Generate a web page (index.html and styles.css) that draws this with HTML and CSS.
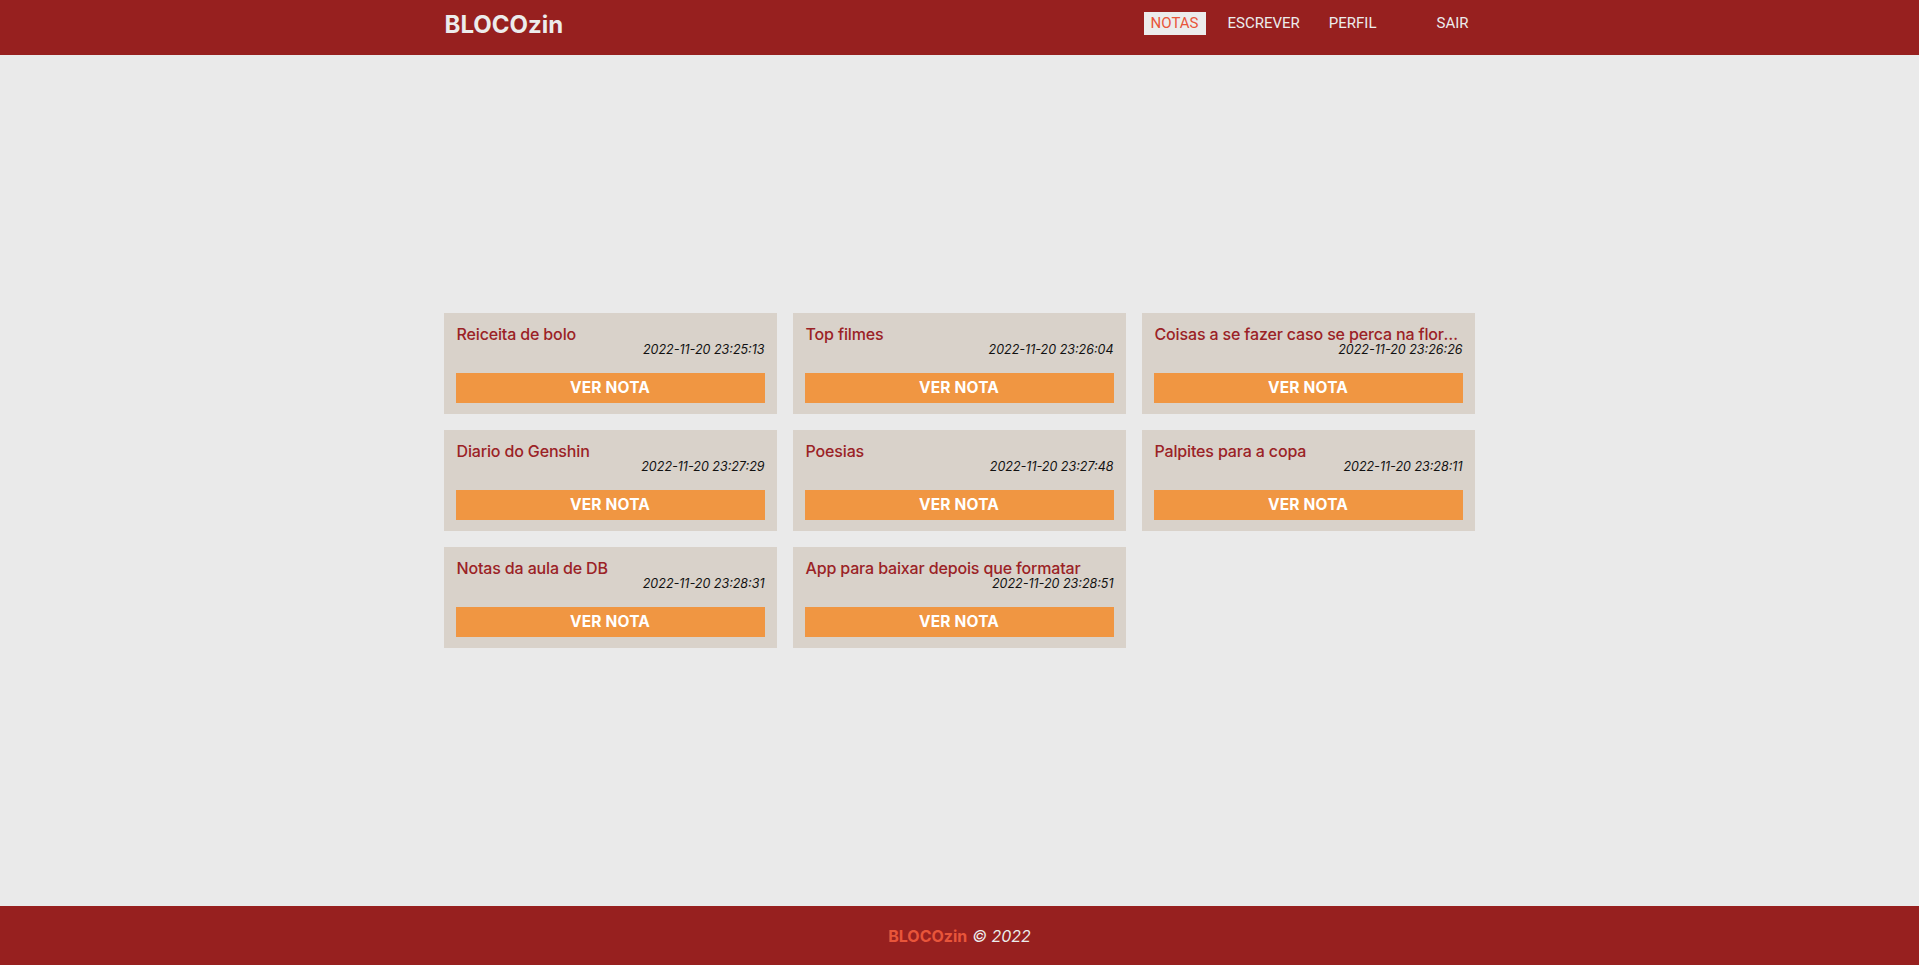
FILE: index.html
```html
<!DOCTYPE html>
<html lang="pt-BR">
<head>
<meta charset="utf-8">
<title>BLOCOzin</title>
<link rel="stylesheet" href="styles.css">
</head>
<body>
<header class="topbar">
  <div class="topbar-inner">
    <a class="logo" href="#">BLOCOzin</a>
    <nav class="nav">
      <a class="nav-link active" href="#">NOTAS</a>
      <a class="nav-link" href="#">ESCREVER</a>
      <a class="nav-link" href="#">PERFIL</a>
      <a class="nav-link logout" href="#">SAIR</a>
    </nav>
  </div>
</header>
<main class="content">
  <div class="grid">
    <div class="card"><div class="card-title">Reiceita de bolo</div><div class="card-date">2022-11-20 23:25:13</div><a class="btn" href="#">VER NOTA</a></div>
    <div class="card"><div class="card-title">Top filmes</div><div class="card-date">2022-11-20 23:26:04</div><a class="btn" href="#">VER NOTA</a></div>
    <div class="card"><div class="card-title">Coisas a se fazer caso se perca na floresta amazônica</div><div class="card-date">2022-11-20 23:26:26</div><a class="btn" href="#">VER NOTA</a></div>
    <div class="card"><div class="card-title">Diario do Genshin</div><div class="card-date">2022-11-20 23:27:29</div><a class="btn" href="#">VER NOTA</a></div>
    <div class="card"><div class="card-title">Poesias</div><div class="card-date">2022-11-20 23:27:48</div><a class="btn" href="#">VER NOTA</a></div>
    <div class="card"><div class="card-title">Palpites para a copa</div><div class="card-date">2022-11-20 23:28:11</div><a class="btn" href="#">VER NOTA</a></div>
    <div class="card"><div class="card-title">Notas da aula de DB</div><div class="card-date">2022-11-20 23:28:31</div><a class="btn" href="#">VER NOTA</a></div>
    <div class="card"><div class="card-title">App para baixar depois que formatar</div><div class="card-date">2022-11-20 23:28:51</div><a class="btn" href="#">VER NOTA</a></div>
  </div>
</main>
<footer class="footer">
  <span class="footer-brand">BLOCOzin</span> <span class="footer-copy">© 2022</span>
</footer>
</body>
</html>
```
FILE: styles.css
```css
* { box-sizing: border-box; }
html, body { height: 100%; }
body {
  margin: 0;
  background: #eaeaea;
  font-family: Inter, "Open Sans", sans-serif;
  display: flex;
  flex-direction: column;
  min-height: 100vh;
}
a { text-decoration: none; }

.topbar {
  background: #97201f;
  height: 55px;
  flex: 0 0 auto;
}
.topbar-inner {
  width: 1032px;
  margin: 0 auto;
  display: flex;
  align-items: flex-start;
  justify-content: space-between;
  height: 100%;
}
.logo {
  color: #ececec;
  font-weight: 700;
  font-size: 24px;
  line-height: 28px;
  margin-top: 11px;
  margin-left: 1px;
}
.nav {
  display: flex;
  align-items: center;
  margin-top: 12px;
}
.nav-link {
  font-family: Roboto, "Liberation Sans", sans-serif;
  color: #ececec;
  font-size: 15px;
  line-height: 23px;
  padding: 0 7px;
  margin-left: 15px;
}
.nav-link.active {
  background: #ececec;
  color: #e8553a;
  margin-left: 0;
}
.nav-link.logout { margin-left: 46px; }

.content {
  flex: 1 0 auto;
  display: flex;
  align-items: center;
  justify-content: center;
}
.grid {
  width: 1032px;
  display: grid;
  grid-template-columns: repeat(3, 333px);
  gap: 16px;
}
.card {
  background: #d9d2ca;
  padding: 11px 12px 11px 12px;
  height: 101px;
  display: flex;
  flex-direction: column;
}
.card-title {
  color: #9b2226;
  font-weight: 500;
  font-size: 16px;
  line-height: 20px;
  letter-spacing: -0.15px;
  white-space: nowrap;
  overflow: hidden;
  text-overflow: ellipsis;
  padding-left: 1px;
  padding-right: 0;
}
.card-date {
  color: #111;
  font-style: italic;
  font-size: 12.5px;
  line-height: 15px;
  margin-top: -2px;
  text-align: right;
}
.btn {
  margin-top: auto;
  display: block;
  height: 30px;
  line-height: 30px;
  background: #f09642;
  color: #fff;
  text-align: center;
  font-weight: 700;
  font-size: 15.5px;
  letter-spacing: 0.2px;
}

.footer {
  background: #97201f;
  height: 59px;
  flex: 0 0 auto;
  display: flex;
  align-items: center;
  justify-content: center;
  gap: 5px;
  font-size: 16px;
}
.footer-brand { color: #e8553a; font-weight: 700; }
.footer-copy { color: #ececec; font-style: italic; }
```
